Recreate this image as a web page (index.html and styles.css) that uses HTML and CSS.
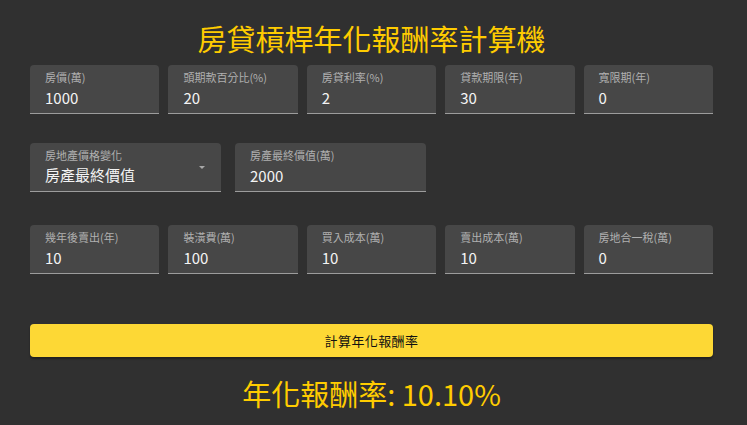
FILE: index.html
```html
<!DOCTYPE html>
<html lang="zh-Hant">
<head>
<meta charset="utf-8">
<title>房貸槓桿年化報酬率計算機</title>
<link rel="stylesheet" href="styles.css">
</head>
<body>
<div class="page">
  <h1 class="title">房貸槓桿年化報酬率計算機</h1>

  <div class="row row-five">
    <div class="field"><span class="label">房價(萬)</span><span class="value">1000</span></div>
    <div class="field"><span class="label">頭期款百分比(%)</span><span class="value">20</span></div>
    <div class="field"><span class="label">房貸利率(%)</span><span class="value">2</span></div>
    <div class="field"><span class="label">貸款期限(年)</span><span class="value">30</span></div>
    <div class="field"><span class="label">寬限期(年)</span><span class="value">0</span></div>
  </div>

  <div class="row row-two">
    <div class="field select">
      <div class="select-body"><span class="label">房地產價格變化</span><span class="value">房產最終價值</span></div>
      <span class="arrow"></span>
    </div>
    <div class="field"><span class="label">房產最終價值(萬)</span><span class="value">2000</span></div>
  </div>

  <div class="row row-five row-third">
    <div class="field"><span class="label">幾年後賣出(年)</span><span class="value">10</span></div>
    <div class="field"><span class="label">裝潢費(萬)</span><span class="value">100</span></div>
    <div class="field"><span class="label">買入成本(萬)</span><span class="value">10</span></div>
    <div class="field"><span class="label">賣出成本(萬)</span><span class="value">10</span></div>
    <div class="field"><span class="label">房地合一稅(萬)</span><span class="value">0</span></div>
  </div>

  <button class="calc">計算年化報酬率</button>

  <div class="result">年化報酬率: 10.10%</div>
</div>
</body>
</html>
```

FILE: styles.css
```css
html, body {
  margin: 0;
  padding: 0;
  background: #303030;
}
body {
  font-family: "Noto Sans CJK TC", "Noto Sans", sans-serif;
  color: #fff;
}
.page {
  width: 683px;
  padding: 0 34px 0 30px;
}
.title {
  margin: 18px 0 0;
  height: 40px;
  line-height: 40px;
  font-size: 29px;
  font-weight: 400;
  text-align: center;
  color: #ffcc00;
}
.row {
  display: grid;
  gap: 9px;
}
.row-five {
  grid-template-columns: repeat(5, 1fr);
  margin-top: 7px;
}
.row-two {
  grid-template-columns: 191px 191px;
  gap: 14px;
  margin-top: 29px;
}
.row-third {
  margin-top: 33px;
}
.field {
  box-sizing: border-box;
  height: 49px;
  background: #474747;
  border-radius: 4px 4px 0 0;
  border-bottom: 1px solid #9c9c9c;
  padding: 5px 15px 0;
  display: flex;
  flex-direction: column;
}
.label {
  font-size: 11px;
  line-height: 14px;
  color: #b0b0b0;
  white-space: nowrap;
}
.value {
  margin-top: 4px;
  font-size: 15px;
  line-height: 20px;
  color: #f4f4f4;
}
.select {
  flex-direction: row;
  align-items: flex-start;
  padding-right: 16px;
}
.select-body {
  flex: 1;
  display: flex;
  flex-direction: column;
}
.select .value {
  margin-top: 3px;
}
.arrow {
  margin-top: 18px;
  width: 0;
  height: 0;
  border-left: 3.5px solid transparent;
  border-right: 3.5px solid transparent;
  border-top: 3.5px solid #a8a8a8;
}
.calc {
  display: block;
  width: 100%;
  height: 33px;
  margin-top: 50px;
  border: none;
  border-radius: 4px;
  background: #fdd835;
  color: #111;
  font-family: inherit;
  font-size: 13px;
  letter-spacing: 0.4px;
  box-shadow: 0 2px 2px rgba(0, 0, 0, 0.35);
  padding: 0;
}
.result {
  margin-top: 16px;
  height: 40px;
  line-height: 40px;
  font-size: 29px;
  text-align: center;
  color: #ffcc00;
}
```
